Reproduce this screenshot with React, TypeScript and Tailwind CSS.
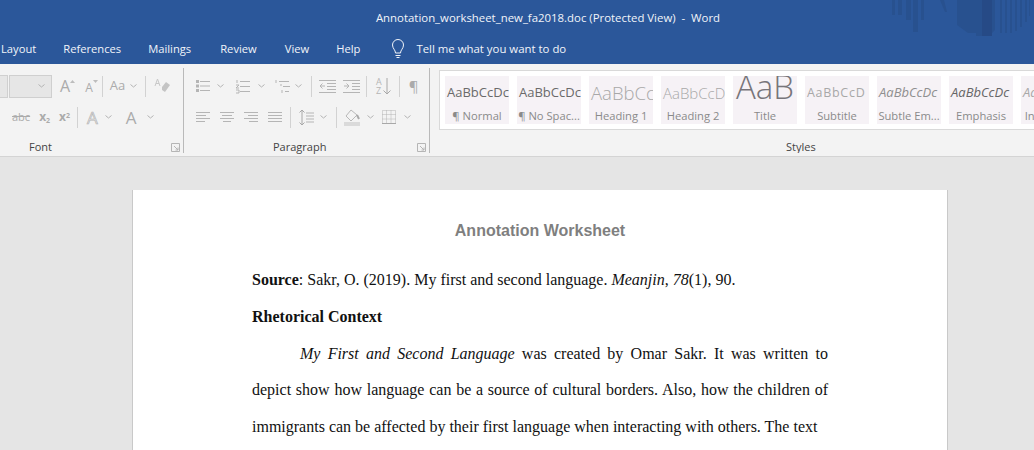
const Chev = () => (
  <svg width="7" height="4" viewBox="0 0 7 4" className="shrink-0" fill="none" stroke="#b3b3b3" strokeWidth="1"><path d="M.5.5l3 2.500 3-2.500" /></svg>
);

const Lines = ({ kind }: { kind: 'left' | 'center' | 'right' | 'justify' }) => {
  const rows = {
    left: [[0, 14], [0, 10], [0, 14], [0, 9]],
    center: [[0, 14], [2, 10], [0, 14], [3, 8]],
    right: [[0, 14], [4, 10], [0, 14], [5, 9]],
    justify: [[0, 14], [0, 14], [0, 14], [0, 14]],
  }[kind];
  return (
    <svg width="14" height="12" viewBox="0 0 14 12" stroke="#b5b5b5" className="shrink-0">
      {rows.map(([x, w], i) => <path key={i} d={`M${x} ${i * 3 + 1.5}h${w}`} />)}
    </svg>
  );
};

const VSep = () => <div className="w-px h-[21px] bg-[#d2d2d2] shrink-0" />;

const Launcher = () => (
  <svg width="9" height="9" viewBox="0 0 9 9" fill="none" stroke="#b5b5b5"><path d="M.5 8.500v-8h8v8zM3 3l4 4M7 4.500V7H4.500" /></svg>
);

const styles = [
  { s: 'AaBbCcDc', l: '¶ Normal', c: 'text-[13px] pt-[2px] text-[#6a6a6a]' },
  { s: 'AaBbCcDc', l: '¶ No Spac...', c: 'text-[13px] pt-[2px] text-[#6a6a6a]' },
  { s: 'AaBbCc', l: 'Heading 1', c: 'text-[18.5px] pt-[2px] text-[#a8a8a8] font-light' },
  { s: 'AaBbCcD', l: 'Heading 2', c: 'text-[15px] pt-[2px] text-[#a8a8a8] font-light' },
  { s: 'AaB', l: 'Title', c: 'text-[33px] pb-[10px] text-[#77757a] font-light pl-[3px]' },
  { s: 'AaBbCcD', l: 'Subtitle', c: 'text-[12.5px] pt-[2px] tracking-[0.7px] text-[#a8a8a8]' },
  { s: 'AaBbCcDc', l: 'Subtle Em...', c: 'text-[13px] pt-[2px] italic text-[#8f8f8f]' },
  { s: 'AaBbCcDc', l: 'Emphasis', c: 'text-[13px] pt-[2px] italic text-[#666]' },
  { s: 'AaBbCcDc', l: 'Intense E...', c: 'text-[13px] pt-[2px] italic text-[#a8a8a8]' },
];

export default function App() {
  return (
    <div className="w-[1034px] h-[450px] overflow-hidden flex flex-col bg-[#e5e5e5] font-['Open_Sans','Noto_Sans',sans-serif]">
      {/* title + tabs */}
      <div className="relative h-16 shrink-0 bg-[#2b579a] text-[#f1f4f9] text-[11.4px]">
        <svg className="absolute right-0 top-0" width="142" height="38" viewBox="0 0 142 38" fill="#28518f">
          <path d="M0 0h3v15H0zM6 0h4v15H6zM14 0h5v20h-5zM21 0h5v32h-5zM29 0h3v20h-3zM48 0h4l3 12h-2z" />
          <path d="M65 0h38v30l-3 3h-4l-2 3h-10v-3h-8l-11-8z" />
          <path d="M108 0h2v33h-2zM113 0h2v33h-2zM118 0h2v33h-2zM123 0h2v31h-2zM128 0h2v27h-2zM133 0h2v22h-2zM137 0h1v16h-1z" />
          <path d="M90 0h10v36H90z" fill="#264a86" />
        </svg>
        <div className="relative h-[34px] flex items-center justify-center pt-px">
          <span className="ml-[62px] whitespace-pre">Annotation_worksheet_new_fa2018.doc (Protected View)  -  Word</span>
        </div>
        <div className="relative flex items-center h-[30px] text-[11.2px]">
          <span className="ml-[1px]">Layout</span>
          <span className="ml-[27px]">References</span>
          <span className="ml-[27px]">Mailings</span>
          <span className="ml-[29px]">Review</span>
          <span className="ml-[28px]">View</span>
          <span className="ml-[27px]">Help</span>
          <svg className="ml-[30px]" width="16" height="20" viewBox="0 0 16 20" fill="none" stroke="#f1f4f9" strokeWidth="1">
            <path d="M5.500 14c0-3-3-4.500-3-8a5.500 5.500 0 0 1 11 0c0 3.500-3 5-3 8zM5.500 16.500h5M6.500 18.500h3" />
          </svg>
          <span className="ml-[10px] text-[11.4px]">Tell me what you want to do</span>
        </div>
      </div>

      {/* ribbon */}
      <div className="h-[93px] shrink-0 flex bg-[#f3f3f3] border-b border-[#d4d4d4] text-[#444]">
        {/* font group */}
        <div className="w-[184px] shrink-0 flex flex-col border-r border-[#b9b9b9] mt-1 mb-[3px]">
          <div className="flex items-center h-[28px] pt-[8px]">
            <div className="w-[8px] h-[23px] border border-l-0 border-[#d0d0d0] bg-[#e6e6e6]" />
            <div className="ml-[1px] w-[43px] h-[23px] border border-[#cfcfcf] bg-[#e6e6e6] flex items-center justify-end pr-1.5"><Chev /></div>
            <span className="ml-[8px] relative text-[16px] leading-none text-[#ababab]">A</span>
            <svg className="mb-[9px]" width="5" height="3" viewBox="0 0 5 3" fill="#bdbdbd"><path d="M0 3l2.500-3L5 3z" /></svg>
            <span className="ml-[10px] text-[12px] leading-none text-[#ababab] mt-1">A</span>
            <svg className="mb-[9px]" width="5" height="3" viewBox="0 0 5 3" fill="#bdbdbd"><path d="M0 0l2.500 3L5 0z" /></svg>
            <div className="ml-[4px]"><VSep /></div>
            <span className="ml-[7px] text-[13px] text-[#ababab]">Aa</span>
            <div className="ml-[5px]"><Chev /></div>
            <div className="ml-[8px]"><VSep /></div>
            <svg className="ml-[8px]" width="16" height="16" viewBox="0 0 16 16"><path d="M8 9l4-5 4 3-5 7-3-2z" fill="#c4c4c4" /><path d="M1 8l2.500-7L6 8M2 5.500h3" fill="none" stroke="#c8c8c8" /></svg>
          </div>
          <div className="flex items-center h-[32px] pt-[10px]">
            <span className="ml-[12px] text-[11px] line-through text-[#ababab]">abc</span>
            <span className="ml-[9px] text-[12px] font-bold text-[#ababab]">x<sub className="text-[7px]">2</sub></span>
            <span className="ml-[9px] text-[12px] font-bold text-[#ababab]">x<sup className="text-[7px]">2</sup></span>
            <div className="ml-[7px]"><VSep /></div>
            <span className="ml-[9px] text-[17px] leading-none text-[#f3f3f3] [-webkit-text-stroke:0.7px_#b5b5b5]">A</span>
            <div className="ml-[7px]"><Chev /></div>
            <span className="ml-[14px] text-[17px] leading-none text-[#ababab]">A</span>
            <div className="ml-[10px]"><Chev /></div>
          </div>
          <div className="mt-auto flex items-center h-[12px] text-[11px]">
            <span className="ml-[29px]">Font</span>
            <div className="ml-auto mr-[3px]"><Launcher /></div>
          </div>
        </div>

        {/* paragraph group */}
        <div className="w-[246px] shrink-0 flex flex-col border-r border-[#b9b9b9] mt-1 mb-[3px]">
          <div className="flex items-center h-[28px] pt-[8px] pl-[12px]">
            <svg width="14" height="14" viewBox="0 0 14 14" stroke="#b5b5b5"><path d="M4 2.500h10M4 7h10M4 11.500h10" /><path d="M0 1h3v3H0zM0 5.500h3v3H0zM0 10h3v3H0z" fill="#b5b5b5" stroke="none" /></svg>
            <div className="ml-[7px]"><Chev /></div>
            <svg className="ml-[12px]" width="14" height="15" viewBox="0 0 14 15" stroke="#b5b5b5" fill="none"><path d="M4 2.500h10M4 7.500h10M4 12.500h10M1 1v3M0 6h3L0 9h3M0 11h3v3H0" /></svg>
            <div className="ml-[8px]"><Chev /></div>
            <svg className="ml-[10px]" width="17" height="15" viewBox="0 0 17 15" stroke="#b5b5b5" fill="none"><path d="M4 2.500h10M8 7.500h7M10 12.500h4M1 1v3M5 6h2M7 11v3" /></svg>
            <div className="ml-[3px]"><Chev /></div>
            <div className="ml-[9px]"><VSep /></div>
            <svg className="ml-[7px]" width="17" height="14" viewBox="0 0 17 14" stroke="#b5b5b5" fill="none"><path d="M0 1.500h17M8 4.500h9M8 7.500h9M8 10.500h9M0 13.500h17M6 7H1M3.500 4.500 1 7l2.500 2.500" /></svg>
            <svg className="ml-[7px]" width="17" height="14" viewBox="0 0 17 14" stroke="#b5b5b5" fill="none"><path d="M0 1.500h17M9 4.500h8M9 7.500h8M9 10.500h8M0 13.500h17M1 7h5M3.500 4.500 6 7 3.500 9.500" /></svg>
            <div className="ml-[6px]"><VSep /></div>
            <div className="ml-[9px] flex items-center gap-px">
              <div className="flex flex-col text-[9px] leading-[9px] text-[#b5b5b5]"><span>A</span><span>Z</span></div>
              <svg width="8" height="17" viewBox="0 0 8 17" fill="none" stroke="#a8a8a8"><path d="M4 0v16M.5 12.500 4 16l3.500-3.500" /></svg>
            </div>
            <div className="ml-[8px]"><VSep /></div>
            <span className="ml-[9px] text-[15px] leading-none text-[#ababab]">¶</span>
          </div>
          <div className="flex items-center h-[32px] pt-[10px] pl-[12px]">
            <Lines kind="left" />
            <div className="ml-[10px]"><Lines kind="center" /></div>
            <div className="ml-[10px]"><Lines kind="right" /></div>
            <div className="ml-[10px]"><Lines kind="justify" /></div>
            <div className="ml-[8px]"><VSep /></div>
            <svg className="ml-[8px]" width="15" height="17" viewBox="0 0 15 17" fill="none" stroke="#b5b5b5"><path d="M7 4h8M7 7h8M7 10h8M7 13h8" /><path d="M3 1v15M.5 3.500 3 1l2.500 2.500M.5 13.500 3 16l2.500-2.500" stroke="#a8a8a8" /></svg>
            <div className="ml-[6px]"><Chev /></div>
            <div className="ml-[9px]"><VSep /></div>
            <svg className="ml-[7px]" width="17" height="17" viewBox="0 0 17 17" fill="none"><path d="M7 1 2 7l5 5 6-6z" stroke="#b8b8b8" /><path d="M13 6l2 4" stroke="#a8a8a8" strokeWidth="2" /><path d="M0 13h16v4H0z" fill="#dadada" /></svg>
            <div className="ml-[6px]"><Chev /></div>
            <svg className="ml-[8px]" width="14" height="14" viewBox="0 0 14 14" fill="none" stroke="#b5b5b5" strokeDasharray="1 1"><path d="M.5.500h13v13H.5zM.5 4.500h13M.5 9h13M4.500.500v13M9 .500v13" /><path d="M0 13.500h14" stroke="#a8a8a8" strokeDasharray="none" /></svg>
            <div className="ml-[8px]"><Chev /></div>
          </div>
          <div className="mt-auto flex items-center h-[12px] text-[11px]">
            <span className="ml-[89px]">Paragraph</span>
            <div className="ml-auto mr-[3px]"><Launcher /></div>
          </div>
        </div>

        {/* styles group, runs on past the window edge */}
        <div className="flex-1 min-w-0 flex flex-col pl-[9px] mt-1 mb-[3px] overflow-hidden">
          <div className="mt-[2px] h-[60px] border border-[#d9d9d9] border-r-0 bg-white flex gap-[8px] pl-[5px] pt-[5px]">
            {styles.map((st) => (
              <div key={st.l} className="w-[64px] h-[48px] shrink-0 bg-[#f6f2f6] flex flex-col items-center overflow-hidden">
                <div className={`h-[32px] w-full flex items-center pl-[2px] overflow-hidden whitespace-nowrap ${st.c}`}>{st.s}</div>
                <div className="text-[11.2px] leading-[16px] text-[#8a8a8a] whitespace-nowrap">{st.l}</div>
              </div>
            ))}
          </div>
          <div className="mt-auto h-[12px] flex items-center text-[11px]">
            <span className="ml-[347px]">Styles</span>
          </div>
        </div>
      </div>

      {/* document */}
      <div className="flex-1 min-h-0 pt-[33px] pl-[132px] overflow-hidden">
        <div className="w-[816px] h-[400px] bg-white border-x border-[#c9c9c9] pl-[119px] pr-[119px] pt-[29px] text-[#111] font-['Liberation_Serif',serif] text-[16px]">
          <h1 className="text-center font-['Liberation_Sans',sans-serif] font-bold text-[16px] leading-[24px] text-[#7f7f7f]">Annotation Worksheet</h1>
          <p className="mt-[25px] leading-[24px]"><b>Source</b>: Sakr, O. (2019). My first and second language. <i>Meanjin</i>, <i>78</i>(1), 90.</p>
          <p className="mt-[13px] leading-[24px] font-bold">Rhetorical Context</p>
          <p className="mt-[6.5px] leading-[36.7px] text-justify indent-12">
            <i>My First and Second Language</i> was created by Omar Sakr. It was written to depict show how language can be a source of cultural borders. Also, how the children of immigrants can be affected by their first language when interacting with others. The text
          </p>
        </div>
      </div>
    </div>
  );
}
